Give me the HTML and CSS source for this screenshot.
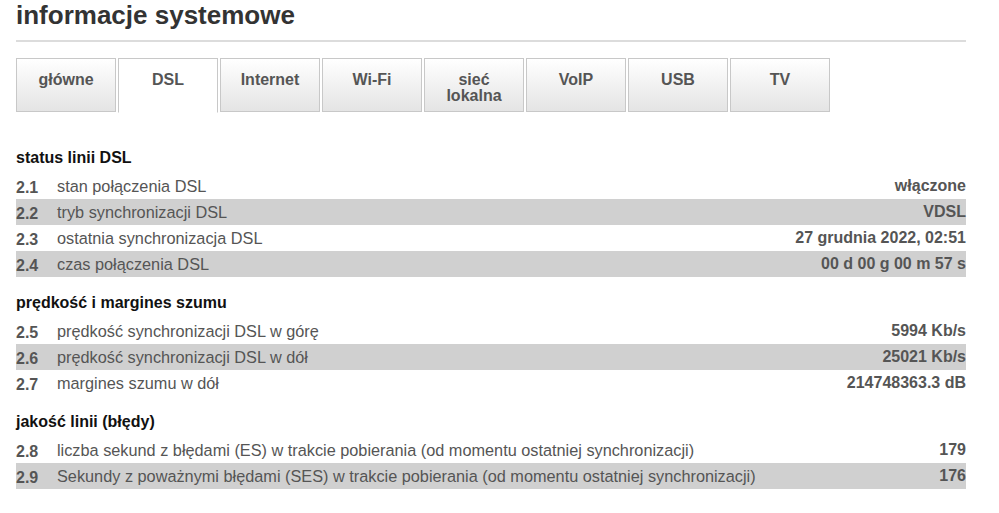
FILE: index.html
```html
<!DOCTYPE html>
<html lang="pl">
<head>
<meta charset="utf-8">
<title>informacje systemowe</title>
<link rel="stylesheet" href="styles.css">
</head>
<body>
<div class="page">
  <h1 class="title">informacje systemowe</h1>
  <div class="rule"></div>
  <nav class="tabs">
    <div class="tab">główne</div>
    <div class="tab active">DSL</div>
    <div class="tab">Internet</div>
    <div class="tab">Wi-Fi</div>
    <div class="tab">sieć<br>lokalna</div>
    <div class="tab">VoIP</div>
    <div class="tab">USB</div>
    <div class="tab">TV</div>
  </nav>

  <section class="group first">
    <h2 class="group-title">status linii DSL</h2>
    <div class="row"><span class="num">2.1</span><span class="label">stan połączenia DSL</span><span class="value">włączone</span></div>
    <div class="row alt"><span class="num">2.2</span><span class="label">tryb synchronizacji DSL</span><span class="value">VDSL</span></div>
    <div class="row"><span class="num">2.3</span><span class="label">ostatnia synchronizacja DSL</span><span class="value">27 grudnia 2022, 02:51</span></div>
    <div class="row alt"><span class="num">2.4</span><span class="label">czas połączenia DSL</span><span class="value">00 d 00 g 00 m 57 s</span></div>
  </section>

  <section class="group">
    <h2 class="group-title">prędkość i margines szumu</h2>
    <div class="row"><span class="num">2.5</span><span class="label">prędkość synchronizacji DSL w górę</span><span class="value">5994 Kb/s</span></div>
    <div class="row alt"><span class="num">2.6</span><span class="label">prędkość synchronizacji DSL w dół</span><span class="value">25021 Kb/s</span></div>
    <div class="row"><span class="num">2.7</span><span class="label">margines szumu w dół</span><span class="value">214748363.3 dB</span></div>
  </section>

  <section class="group">
    <h2 class="group-title">jakość linii (błędy)</h2>
    <div class="row"><span class="num">2.8</span><span class="label">liczba sekund z błędami (ES) w trakcie pobierania (od momentu ostatniej synchronizacji)</span><span class="value">179</span></div>
    <div class="row alt"><span class="num">2.9</span><span class="label">Sekundy z poważnymi błędami (SES) w trakcie pobierania (od momentu ostatniej synchronizacji)</span><span class="value">176</span></div>
  </section>
</div>
</body>
</html>
```

FILE: styles.css
```css
html, body {
  margin: 0;
  padding: 0;
  background: #fff;
}
body {
  font-family: "Liberation Sans", Arial, sans-serif;
  color: #555;
}
.page {
  width: 950px;
  margin-left: 16px;
}
.title {
  margin: 0;
  font-size: 26px;
  line-height: 30px;
  font-weight: bold;
  color: #333;
}
.rule {
  margin-top: 10px;
  height: 2px;
  background: #dcdcdc;
}
.tabs {
  display: flex;
  gap: 2px;
  margin-top: 16px;
  width: 814px;
}
.tab {
  box-sizing: border-box;
  width: 100px;
  height: 54px;
  padding-top: 13px;
  border: 1px solid #c8c8c8;
  background: linear-gradient(#ffffff, #e4e4e4);
  text-align: center;
  font-size: 16px;
  line-height: 16px;
  font-weight: bold;
  color: #555;
}
.tab.active {
  background: #fff;
  border-bottom-color: #fff;
  height: 55px;
}
.group {
  margin-top: 16px;
}
.group.first {
  margin-top: 35px;
}
.group-title {
  margin: 0;
  padding-bottom: 5px;
  font-size: 16px;
  line-height: 20px;
  font-weight: bold;
  color: #111;
}
.row {
  display: flex;
  align-items: center;
  height: 26px;
  font-size: 16px;
}
.row.alt {
  background: #d0d0d0;
}
.num {
  width: 41px;
  font-weight: bold;
  color: #555;
  padding-top: 3px;
}
.label {
  flex: 1;
  font-size: 16.3px;
  color: #555;
}
.value {
  font-weight: bold;
  color: #555;
  text-align: right;
}
```
